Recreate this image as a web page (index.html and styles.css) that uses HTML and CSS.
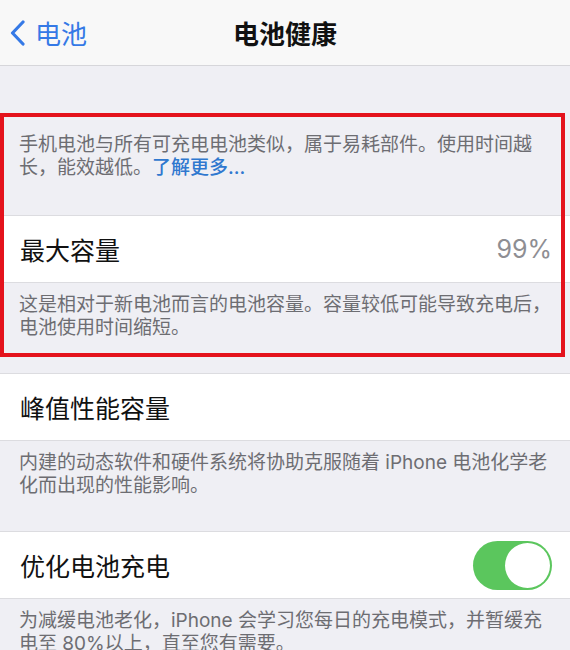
FILE: index.html
```html
<!DOCTYPE html>
<html lang="zh-CN">
<head>
    <meta charset="UTF-8">
    <meta name="viewport" content="width=device-width, initial-scale=1.0">
    <title>电池健康</title>
    <link rel="stylesheet" href="styles.css">
</head>
<body>
    <div class="page">
        <header class="nav-bar">
            <a class="nav-back" href="#">
                <svg class="nav-chevron" viewBox="0 0 15 26" width="15" height="26">
                    <path d="M13 2 L2.5 13 L13 24" fill="none" stroke="currentColor" stroke-width="3.2" stroke-linecap="round" stroke-linejoin="round"/>
                </svg>
                <span>电池</span>
            </a>
            <h1 class="nav-title">电池健康</h1>
            <div></div>
        </header>

        <p class="group-header">
            手机电池与所有可充电电池类似，属于易耗部件。使用时间越长，能效越低。<a class="link" href="#">了解更多...</a>
        </p>

        <div class="cell">
            <span class="cell-label">最大容量</span>
            <span class="cell-value">99%</span>
        </div>
        <p class="group-footer">这是相对于新电池而言的电池容量。容量较低可能导致充电后，电池使用时间缩短。</p>

        <div class="cell">
            <span class="cell-label">峰值性能容量</span>
        </div>
        <p class="group-footer">内建的动态软件和硬件系统将协助克服随着 iPhone 电池化学老化而出现的性能影响。</p>

        <div class="cell">
            <span class="cell-label">优化电池充电</span>
            <span class="switch on"><span class="switch-knob"></span></span>
        </div>
        <p class="group-footer">为减缓电池老化，iPhone 会学习您每日的充电模式，并暂缓充电至 80%以上，直至您有需要。</p>

        <!-- highlight frame drawn over the first group -->
        <div class="highlight"></div>
    </div>
</body>
</html>
```

FILE: styles.css
```css
body {
    margin: 0;
    background: #efeff4;
    font-family: Inter, "Noto Sans CJK SC", sans-serif;
    overflow: hidden;
}

.page {
    position: relative;
    width: 570px;
    height: 650px;
    overflow: hidden;
}

.nav-bar {
    display: grid;
    grid-template-columns: 1fr auto 1fr;
    align-items: center;
    height: 65px;
    background: #f8f8f8;
    border-bottom: 1px solid #d6d6da;
}

.nav-back {
    display: flex;
    align-items: center;
    gap: 10px;
    padding-left: 10px;
    color: #3579e6;
    text-decoration: none;
    font-size: 26px;
}

.nav-chevron {
    display: block;
}

.nav-title {
    margin: 0;
    font-size: 26px;
    font-weight: 600;
    color: #111;
}

.group-header,
.group-footer {
    margin: 0;
    padding: 10px 14px 34px 19px;
    font-size: 19px;
    line-height: 23px;
    color: #6d6d72;
}

.group-header {
    padding-top: 67px;
    padding-bottom: 36px;
}

.link {
    color: #2f78cf;
    text-decoration: none;
    font-weight: 500;
}

.cell {
    display: flex;
    align-items: center;
    justify-content: space-between;
    height: 66px;
    padding: 0 18px 0 20px;
    background: #fff;
    border-top: 1px solid #dcdce0;
    border-bottom: 1px solid #dcdce0;
}

.cell-label {
    font-size: 25px;
    color: #111;
}

.cell-value {
    font-size: 25px;
    color: #8e8e93;
}

.switch {
    position: relative;
    width: 79px;
    height: 49px;
    border-radius: 25px;
    background: #5bc65d;
}

.switch-knob {
    position: absolute;
    top: 2px;
    right: 2px;
    width: 45px;
    height: 45px;
    border-radius: 50%;
    background: #fff;
}

.highlight {
    position: absolute;
    left: 0;
    top: 113px;
    width: 565px;
    height: 244px;
    box-sizing: border-box;
    border: 4px solid #e4121c;
    pointer-events: none;
}
```
